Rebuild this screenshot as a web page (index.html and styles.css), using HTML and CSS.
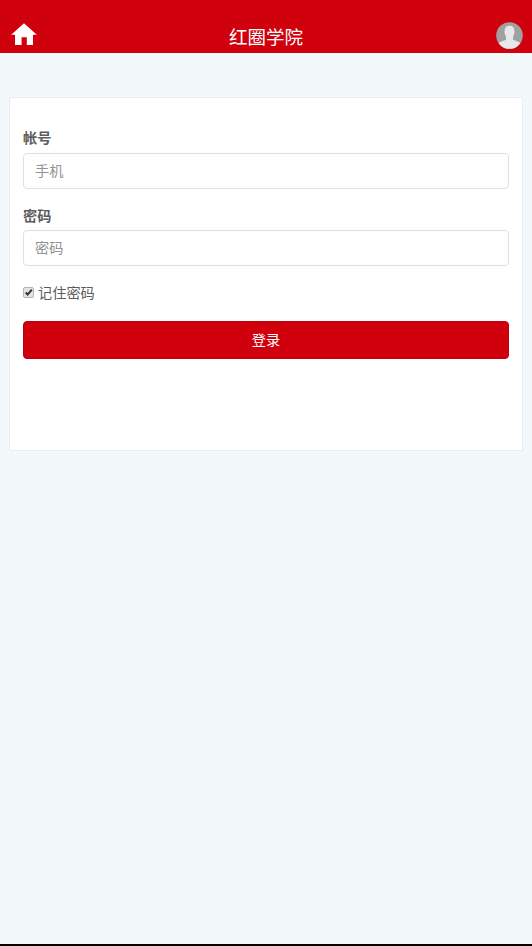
FILE: index.html
```html
<!DOCTYPE html>
<html lang="zh-CN">
<head>
<meta charset="utf-8">
<title>红圈学院</title>
<link rel="stylesheet" href="styles.css">
</head>
<body>
<header class="topbar">
  <a class="home" href="#"><svg width="26" height="22" viewBox="0 0 26 22"><path fill="#fff" d="M13 .2 25.8 11.8H22V22h-6.200v-7.700h-5.200V22H4V11.800H.2Z"/></svg></a>
  <h1 class="title">红圈学院</h1>
  <a class="avatar" href="#"><svg width="27" height="27" viewBox="0 0 27 27">
    <defs><clipPath id="disc"><circle cx="13.5" cy="13.5" r="13.3"/></clipPath></defs>
    <g clip-path="url(#disc)"><rect width="27" height="27" fill="#a0a0a0"/><path fill="#e8e8e8" d="M13.500 3.800C17 3.800 18.500 6 18.300 9c.5.5.4 2.200-.3 2.700-.2 1.600-.6 2.600-1 3.300v2.500c1.500 1.500 6.500 1.800 7.800 4.500V27H2.200v-5c1.300-2.700 6.300-3 7.800-4.500V15c-.4-.7-.8-1.700-1-3.300-.7-.5-.8-2.200-.3-2.700-.2-3 1.300-5.200 4.800-5.200Z"/></g>
  </svg></a>
</header>
<main class="panel">
  <form class="form">
    <label class="label" for="account">帐号</label>
    <input class="field" id="account" type="text" placeholder="手机">
    <label class="label second" for="password">密码</label>
    <input class="field" id="password" type="password" placeholder="密码">
    <label class="remember"><svg class="check" width="11" height="11" viewBox="0 0 11 11"><rect x=".5" y=".5" width="10" height="10" rx="1.500" fill="#e4e4e4" stroke="#b5b5b5"/><path d="M2.700 5.500 4.700 7.600 8.800 2.700" fill="none" stroke="#333" stroke-width="2"/></svg>记住密码</label>
    <button class="submit" type="button">登录</button>
  </form>
</main>
<footer class="edge"></footer>
</body>
</html>
```
FILE: styles.css
```css
* { box-sizing: border-box; }
body {
  margin: 0;
  height: 946px;
  display: flex;
  flex-direction: column;
  background: #f3f8fb;
  color: #5c5c5c;
  font: 14.2px/20px "Noto Sans CJK SC", sans-serif;
}
.topbar {
  height: 53px;
  padding: 21px 9px 0 11px;
  display: grid;
  grid-template-columns: 28px 1fr 30px;
  background: #d0000d;
}
.home, .avatar { display: block; line-height: 0; }
.home { padding-top: 2px; }
.avatar { padding-top: 1px; text-align: right; }
.title {
  margin: 0;
  color: #fff;
  font-size: 18.5px;
  font-weight: 400;
  line-height: 30px;
  text-align: center;
}
.panel {
  height: 354px;
  margin: 44px 9px 0;
  padding: 29px 13px 0;
  background: #fff;
  border: 1px solid #e8eef3;
}
.form { display: flex; flex-direction: column; }
.label {
  height: 20px;
  margin-bottom: 6px;
  font-weight: 700;
}
.second { margin-bottom: 5px; }
.field {
  height: 36px;
  margin: 0 0 16px;
  padding: 0 11px 2px;
  border: 1px solid #e0e0e0;
  border-radius: 4px;
  background: #fff;
  color: #555;
  font: inherit;
}
.field::placeholder { color: #929292; opacity: 1; }
.remember {
  display: flex;
  align-items: center;
  height: 20px;
}
.check { margin-right: 4px; }
.submit {
  height: 38px;
  margin-top: 19px;
  padding: 0 0 2px;
  border: 1px solid #b9000c;
  border-radius: 4px;
  background: #d0000d;
  color: #fff;
  font: inherit;
}
.edge { height: 2px; margin-top: auto; background: #000; }
```
